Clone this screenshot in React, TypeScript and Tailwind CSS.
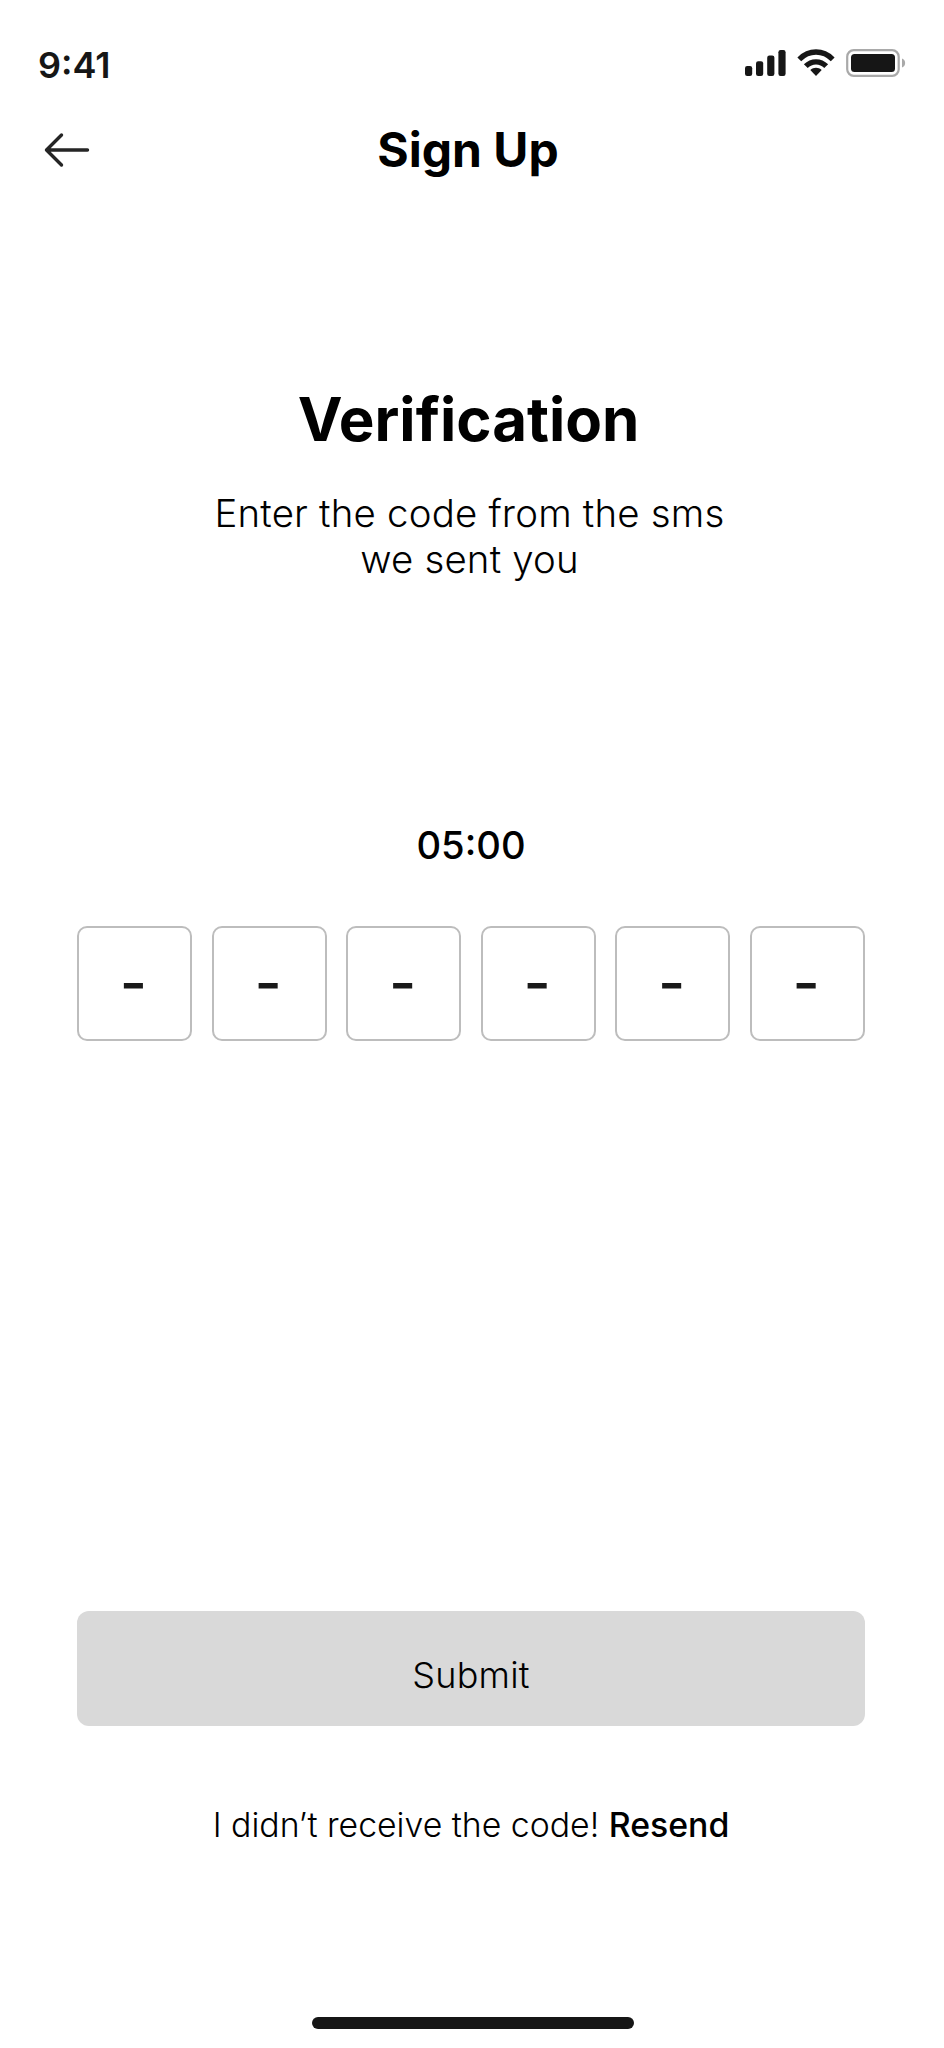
const digits = ['-', '-', '-', '-', '-', '-'];

function StatusBar() {
  return (
    <header className="mt-[34px] flex h-[62px] justify-between pl-[38px] pr-[37px] text-[#161616]">
      <div className="text-[36px] font-semibold leading-[62px]">9:41</div>
      <div className="flex items-start pt-[15px]">
        <svg width="42" height="27" viewBox="0 0 42 27" fill="currentColor">
          <rect x="0" y="17" width="7.200" height="10" rx="2.200" />
          <rect x="11" y="12.200" width="7.200" height="14.800" rx="2.200" />
          <rect x="22.200" y="6.500" width="7.200" height="20.500" rx="2.200" />
          <rect x="33.400" y="1" width="7.200" height="26" rx="2.200" />
        </svg>
        <svg className="ml-[10px]" width="38" height="27" viewBox="0 0 38 27" fill="none" stroke="currentColor" strokeWidth="5.400">
          <path d="M2.300 10.300C12 0.600 26 0.600 35.700 10.300" />
          <path d="M8.800 17.200C14.500 11.400 23.500 11.400 29.200 17.200" />
          <path d="M13.300 21C16.500 18 21.500 18 24.700 21L19 27Z" fill="currentColor" stroke="none" />
        </svg>
        <svg className="ml-[11px]" width="61" height="28" viewBox="0 0 61 28">
          <rect x="1.200" y="1.200" width="51.500" height="25.600" rx="6.500" fill="none" stroke="#a9a9a9" strokeWidth="2.200" />
          <rect x="5" y="5" width="44" height="18" rx="3.500" fill="currentColor" />
          <path d="M56 9.500C60.200 11 60.200 17 56 18.500Z" fill="#a9a9a9" />
        </svg>
      </div>
    </header>
  );
}

function BackArrow() {
  return (
    <svg width="48" height="36" viewBox="0 0 48 36" fill="none" stroke="#252525" strokeWidth="3.400" strokeLinecap="round" strokeLinejoin="round">
      <path d="M18.500 3L3.500 18L18.500 33M3.500 18H44.500" />
    </svg>
  );
}

export default function App() {
  return (
    <div className="flex h-[2048px] w-[944px] flex-col overflow-hidden bg-white font-['Inter',sans-serif] text-black">
      <StatusBar />
      <nav className="mt-[22px] flex h-[64px] items-center pl-[43px] pr-[51px]">
        <button className="w-12" aria-label="Back">
          <BackArrow />
        </button>
        <div className="flex-1 pr-12 text-center text-[48px] font-bold leading-[64px]">Sign Up</div>
      </nav>
      <h1 className="mt-[197px] pr-[7px] text-center text-[60px] font-bold leading-[80px]">Verification</h1>
      <p className="mt-[31px] pr-[5px] text-center text-[38.4px] font-light leading-[46px] tracking-[0.2px]">
        Enter the code from the sms
        <br />
        we sent you
      </p>
      <div className="mt-[238px] pr-[2px] text-center text-[38.2px] font-medium leading-[50px]">05:00</div>
      <div className="ml-[77px] mt-[56px] flex gap-[19.55px]">
        {digits.map((digit, i) => (
          <div
            key={i}
            className="flex size-[115px] items-center justify-center rounded-[10px] border-2 border-[#bdbdbd] pr-[2px] text-[59px] font-medium text-[#1a1a1a]"
          >
            {digit}
          </div>
        ))}
      </div>
      <button className="ml-[77px] mt-[570px] h-[115px] w-[788px] rounded-[12px] bg-[#d9d9d9] pt-[13px] text-[36px] font-light tracking-[0.2px]">
        Submit
      </button>
      <p className="mt-[76px] pr-[2px] text-center text-[33.8px] font-light leading-[46px]">
        I didn’t receive the code! <span className="font-medium">Resend</span>
      </p>
      <div className="ml-[312px] mt-[169px] h-[12px] w-[322px] rounded-full bg-[#161616]" />
    </div>
  );
}
